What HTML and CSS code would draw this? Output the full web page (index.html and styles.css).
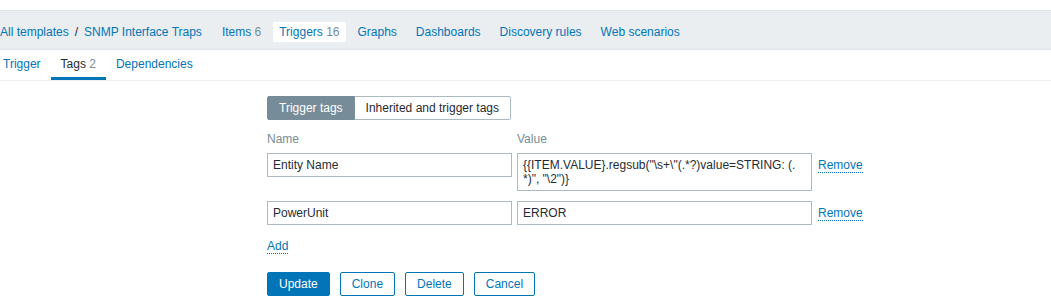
FILE: index.html
```html
<!DOCTYPE html>
<html lang="en">
<head>
  <meta charset="UTF-8" />
  <title>Trigger tags</title>
  <link rel="stylesheet" href="styles.css">
</head>
<body>

<!-- Template navigation -->
<header class="nav-bar">
  <div class="breadcrumbs">
    <a href="#">All templates</a>
    <span class="sep">/</span>
    <a href="#">SNMP Interface Traps</a>
  </div>
  <ul class="nav-list">
    <li><a href="#">Items <span class="count">6</span></a></li>
    <li class="selected"><a href="#">Triggers <span class="count">16</span></a></li>
    <li><a href="#">Graphs</a></li>
    <li><a href="#">Dashboards</a></li>
    <li><a href="#">Discovery rules</a></li>
    <li><a href="#">Web scenarios</a></li>
  </ul>
</header>

<!-- Form tabs -->
<ul class="tabs">
  <li><a href="#">Trigger</a></li>
  <li class="active"><a href="#">Tags <span class="count">2</span></a></li>
  <li><a href="#">Dependencies</a></li>
</ul>

<form class="tag-form">
  <div class="segmented">
    <label class="on">Trigger tags</label>
    <label>Inherited and trigger tags</label>
  </div>

  <table class="tags-table">
    <tr>
      <th>Name</th>
      <th>Value</th>
      <th></th>
    </tr>
    <tr>
      <td><input class="tag-name" type="text" value="Entity Name"></td>
      <td><textarea class="tag-value">{{ITEM.VALUE}.regsub("\s+\"(.*?)value=STRING: (.*)", "\2")}</textarea></td>
      <td class="remove-cell"><a href="#" class="link-action">Remove</a></td>
    </tr>
    <tr>
      <td><input class="tag-name" type="text" value="PowerUnit"></td>
      <td><input class="tag-value" type="text" value="ERROR"></td>
      <td class="remove-cell"><a href="#" class="link-action">Remove</a></td>
    </tr>
    <tr>
      <td class="add-cell" colspan="3"><a href="#" class="link-action">Add</a></td>
    </tr>
  </table>

  <div class="buttons">
    <button type="button" class="btn primary">Update</button>
    <button type="button" class="btn">Clone</button>
    <button type="button" class="btn">Delete</button>
    <button type="button" class="btn">Cancel</button>
  </div>
</form>

</body>
</html>
```

FILE: styles.css
```css
body {
  font-family: "Liberation Sans", Arial, sans-serif;
  font-size: 12px;
  line-height: 14px;
  color: #1f2c33;
  background-color: #fff;
  margin: 0;
  padding: 10px 0 0;
}

a {
  color: #0275b8;
  text-decoration: none;
}

ul {
  list-style: none;
  margin: 0;
  padding: 0;
}

.count {
  color: #768d99;
}

/* Top navigation bar */
.nav-bar {
  display: flex;
  background-color: #ebeef0;
  border-top: 1px solid #dfe4e7;
  border-bottom: 1px solid #dfe4e7;
  padding: 11px 0 7px;
  line-height: 20px;
}

.breadcrumbs {
  display: flex;
  padding-right: 7px;
}

.breadcrumbs .sep {
  padding: 0 6px;
  color: #1f2c33;
}

.nav-list {
  display: flex;
  gap: 5px;
  margin-left: 6px;
}

.nav-list a {
  display: block;
  padding: 0 7px;
  border-radius: 2px;
}

.nav-list li.selected a {
  background-color: #fff;
  padding: 0 6px;
}

/* Tabs */
.tabs {
  display: flex;
  margin-left: -7px;
  border-bottom: 1px solid #ebeef0;
}

.tabs a {
  display: block;
  padding: 7px 10px 6px;
  border-bottom: 3px solid transparent;
}

.tabs li.active a {
  color: #1f2c33;
  border-bottom-color: #0275b8;
}

/* Tag form */
.tag-form {
  padding: 15px 0 0 267px;
}

.segmented {
  display: flex;
}

.segmented label {
  height: 24px;
  box-sizing: border-box;
  padding: 0 11px;
  line-height: 22px;
  border: 1px solid #acbbc2;
  background-color: #fff;
}

.segmented label + label {
  border-left: none;
  border-radius: 0 2px 2px 0;
}

.segmented label.on {
  background-color: #768d99;
  border-color: #768d99;
  color: #fff;
  border-radius: 2px 0 0 2px;
}

.tags-table {
  border-collapse: collapse;
  margin-top: 11px;
}

.tags-table th {
  font-weight: normal;
  text-align: left;
  color: #768d99;
  padding: 1px 0 2px;
}

.tags-table td {
  padding: 5px 5px 5px 0;
  vertical-align: top;
}

.tags-table td.remove-cell {
  padding: 10px 0 0 1px;
}

.tags-table td.add-cell {
  padding: 9px 0 0;
}

input,
textarea {
  font-family: "Liberation Sans", Arial, sans-serif;
  font-size: 12px;
  color: #1f2c33;
  box-sizing: border-box;
  border: 1px solid #acbbc2;
  background-color: #fff;
  margin: 0;
  display: block;
}

input {
  height: 24px;
  padding: 0 5px;
}

textarea {
  height: 38px;
  padding: 4px 14px 4px 5px;
  line-height: 14px;
  resize: none;
  overflow: hidden;
  word-break: break-all;
}

.tag-name {
  width: 245px;
}

.tag-value {
  width: 295px;
}

.link-action {
  border-bottom: 1px dotted #0275b8;
}

/* Form buttons */
.buttons {
  display: flex;
  gap: 10px;
  margin-top: 19px;
}

.btn {
  font-family: "Liberation Sans", Arial, sans-serif;
  font-size: 12px;
  height: 24px;
  padding: 0 11px;
  line-height: 22px;
  border: 1px solid #0275b8;
  border-radius: 2px;
  background-color: #fff;
  color: #0275b8;
  cursor: pointer;
}

.btn.primary {
  background-color: #0275b8;
  color: #fff;
}
```
